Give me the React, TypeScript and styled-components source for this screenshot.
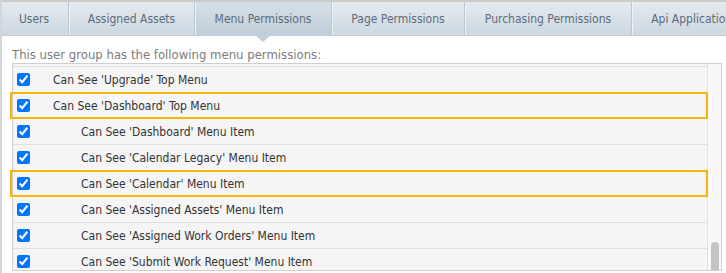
import styled, { createGlobalStyle } from 'styled-components'

const GlobalStyle = createGlobalStyle`
  html, body {
    margin: 0;
    padding: 0;
    background: #ffffff;
  }
  body {
    font-family: 'DejaVu Sans Condensed', 'DejaVu Sans', sans-serif;
  }
`

interface TabItem {
  label: string
  width: number
}

interface PermissionItem {
  label: string
  level: number
  marked?: boolean
}

const tabs: TabItem[] = [
  { label: 'Users', width: 69 },
  { label: 'Assigned Assets', width: 126 },
  { label: 'Menu Permissions', width: 137 },
  { label: 'Page Permissions', width: 133 },
  { label: 'Purchasing Permissions', width: 167 },
  { label: 'Api Applications', width: 126 },
]

const permissions: PermissionItem[] = [
  { label: "Can See 'Upgrade' Top Menu", level: 0 },
  { label: "Can See 'Dashboard' Top Menu", level: 0, marked: true },
  { label: "Can See 'Dashboard' Menu Item", level: 1 },
  { label: "Can See 'Calendar Legacy' Menu Item", level: 1 },
  { label: "Can See 'Calendar' Menu Item", level: 1, marked: true },
  { label: "Can See 'Assigned Assets' Menu Item", level: 1 },
  { label: "Can See 'Assigned Work Orders' Menu Item", level: 1 },
  { label: "Can See 'Submit Work Request' Menu Item", level: 1 },
]

export default function App() {
  return (
    <>
      <GlobalStyle />
      <Frame>
        <TabBar>
          {tabs.map((tab) => (
            <Tab key={tab.label} $width={tab.width} $active={tab.label === 'Menu Permissions'}>
              {tab.label}
            </Tab>
          ))}
        </TabBar>
        <Panel>
          <Intro>This user group has the following menu permissions:</Intro>
          <ListBox>
            <Viewport>
              {permissions.map((item) => (
                <Row key={item.label} $marked={!!item.marked}>
                  <Check type="checkbox" defaultChecked />
                  <Label $level={item.level}>{item.label}</Label>
                </Row>
              ))}
            </Viewport>
            <ScrollTrack>
              <ScrollThumb />
            </ScrollTrack>
          </ListBox>
        </Panel>
      </Frame>
    </>
  )
}

const Frame = styled.div`
  width: 726px;
  height: 273px;
  box-sizing: border-box;
  border-left: 2px solid #d6d6d6;
  overflow: hidden;
  display: flex;
  flex-direction: column;
`

const TabBar = styled.div`
  display: flex;
  height: 36px;
  box-sizing: border-box;
  border-top: 2px solid #cbcbcb;
  border-bottom: 1px solid #c3cfd8;
  background: linear-gradient(#e3e9ee, #cfd9e1);
  margin-left: -2px;
  flex-shrink: 0;
`

const Tab = styled.div<{ $width: number; $active: boolean }>`
  position: relative;
  flex: 0 0 ${(p) => p.$width}px;
  box-sizing: border-box;
  display: flex;
  align-items: center;
  justify-content: center;
  white-space: nowrap;
  font-size: 12px;
  color: #5b6b7b;
  border-right: 1px solid #b9c7d2;
  box-shadow: inset 1px 0 0 #eef2f5;
  background: ${(p) =>
    p.$active ? 'linear-gradient(#d7e0e8, #bfcdd8)' : 'linear-gradient(#e4eaef, #cdd8e0)'};

  &::after {
    content: '';
    display: ${(p) => (p.$active ? 'block' : 'none')};
    position: absolute;
    left: 50%;
    bottom: -7px;
    margin-left: -7px;
    border-left: 7px solid transparent;
    border-right: 7px solid transparent;
    border-top: 6px solid #c2cfda;
  }
`

const Panel = styled.div`
  flex: 1;
  padding: 0 4px 2px 10px;
  display: flex;
  flex-direction: column;
  min-height: 0;
`

const Intro = styled.div`
  padding-top: 11px;
  font-size: 13px;
  line-height: 16px;
  color: #7d7d7d;
`

const ListBox = styled.div`
  flex: 1;
  min-height: 0;
  display: flex;
  border: 1px solid #cfcfcf;
  background: #f5f5f5;
`

const Viewport = styled.div`
  flex: 1;
  margin-top: 2px;
  border-top: 1px solid #dedede;
  clip-path: inset(-4px -4px 0 -4px);
`

const Row = styled.div<{ $marked: boolean }>`
  position: relative;
  height: 25px;
  display: flex;
  align-items: center;
  border-bottom: 1px solid #dedede;

  &::after {
    content: '';
    display: ${(p) => (p.$marked ? 'block' : 'none')};
    position: absolute;
    left: -3px;
    right: -1px;
    top: -1px;
    bottom: -1px;
    border: 2px solid #f5b50a;
  }
`

const Check = styled.input`
  width: 13px;
  height: 13px;
  margin: 0 0 0 4px;
  flex-shrink: 0;
`

const Label = styled.span<{ $level: number }>`
  margin-left: ${(p) => 23 + p.$level * 28}px;
  font-size: 12px;
  color: #333333;
  white-space: nowrap;
`

const ScrollTrack = styled.div`
  width: 14px;
  flex-shrink: 0;
  box-sizing: border-box;
  border-left: 1px solid #e2e2e2;
  background: #f8f8f8;
  display: flex;
  flex-direction: column;
  justify-content: flex-end;
  align-items: center;
`

const ScrollThumb = styled.div`
  width: 8px;
  height: 28px;
  border-radius: 4px 4px 0 0;
  background: #c4c4c4;
`
